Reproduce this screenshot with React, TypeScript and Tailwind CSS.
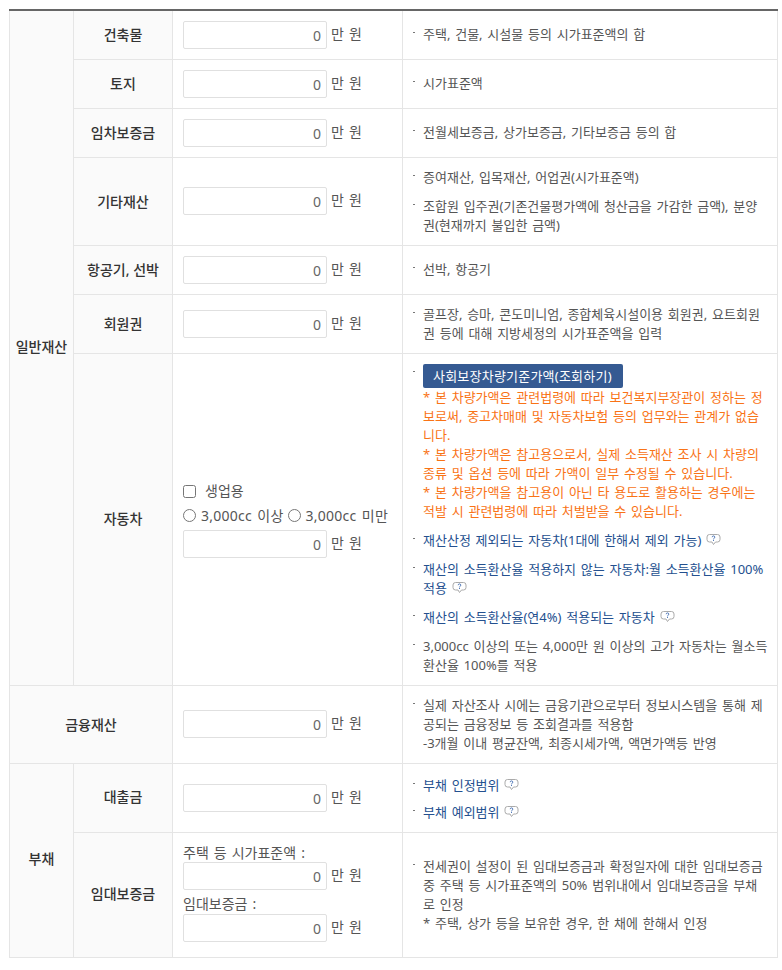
import React from "react";

const th = "border border-[#e5e5e5] bg-[#fafafa] text-center align-middle text-[14px] font-medium text-[#333] p-0";
const tdInput = "border border-[#e5e5e5] px-[10px] py-0 align-middle text-[14px] text-[#555]";
const tdDesc = "border border-[#e5e5e5] pl-[10px] pr-[8px] py-[8px] align-middle text-[13px] leading-[19px] text-[#555] [word-spacing:1.4px]";
const link = "text-[#24508f]";

function Money() {
  return (
    <div className="flex items-center">
      <input
        readOnly
        value="0"
        className="w-[144px] h-[28px] border border-[#e0e0e0] rounded-[2px] bg-white text-right pr-[5px] pt-[1px] text-[14px] text-[#666] outline-none"
      />
      <span className="ml-[4px] text-[14px] leading-[20px] text-[#555] -mt-[2px] [word-spacing:1.4px]">만 원</span>
    </div>
  );
}

function Help() {
  return (
    <svg width="15" height="14" viewBox="0 0 15 14" className="inline-block align-[-2px]">
      <path d="M3.500 1.500h8a2.500 2.500 0 0 1 2.500 2.500v2.500a2.500 2.500 0 0 1-2.500 2.500h-2l-2 2.500-1.500-2.500h-2.500a2.500 2.500 0 0 1-2.500-2.500V4a2.500 2.500 0 0 1 2.500-2.500z" fill="#fff" stroke="#aaa" strokeWidth="1" />
      <path d="M6.200 4.200a1.300 1.300 0 1 1 1.800 1.200c-.4.200-.5.400-.5.700" fill="none" stroke="#2a5aa8" strokeWidth="0.8" />
      <rect x="7" y="6.800" width="1" height="1" fill="#2a5aa8" />
    </svg>
  );
}

function Li({ children, tight = false }: { children: React.ReactNode; tight?: boolean }) {
  return (
    <li className={tight ? "relative pl-[10px] [&+li]:mt-[8px]" : "relative pl-[10px] [&+li]:mt-[10px]"}>
      <span className="absolute left-0 top-[7px] w-[2px] h-[1px] bg-[#777]" />
      {children}
    </li>
  );
}

export default function App() {
  return (
    <div className="bg-white h-[970px] pt-[9px] pl-[9px] pr-[4px] [font-family:'Noto_Sans','Noto_Sans_CJK_KR',sans-serif]">
      <table className="w-[769px] table-fixed border-collapse border-t-2 border-t-[#666]">
        <colgroup>
          <col className="w-[64px]" />
          <col className="w-[99px]" />
          <col className="w-[230px]" />
          <col />
        </colgroup>
        <tbody>
          <tr className="h-[49px]">
            <th rowSpan={7} className={th + " pb-[2px]"}>일반재산</th>
            <th className={th}>건축물</th>
            <td className={tdInput}><Money /></td>
            <td className={tdDesc}><ul><Li>주택, 건물, 시설물 등의 시가표준액의 합</Li></ul></td>
          </tr>
          <tr className="h-[49px]">
            <th className={th}>토지</th>
            <td className={tdInput}><Money /></td>
            <td className={tdDesc}><ul><Li>시가표준액</Li></ul></td>
          </tr>
          <tr className="h-[49px]">
            <th className={th}>임차보증금</th>
            <td className={tdInput}><Money /></td>
            <td className={tdDesc}><ul><Li>전월세보증금, 상가보증금, 기타보증금 등의 합</Li></ul></td>
          </tr>
          <tr className="h-[88px]">
            <th className={th}>기타재산</th>
            <td className={tdInput}><Money /></td>
            <td className={tdDesc}>
              <ul>
                <Li>증여재산, 입목재산, 어업권(시가표준액)</Li>
                <Li>조합원 입주권(기존건물평가액에 청산금을 가감한 금액), 분양권(현재까지 불입한 금액)</Li>
              </ul>
            </td>
          </tr>
          <tr className="h-[49px]">
            <th className={th}>항공기, 선박</th>
            <td className={tdInput}><Money /></td>
            <td className={tdDesc}><ul><Li>선박, 항공기</Li></ul></td>
          </tr>
          <tr className="h-[59px]">
            <th className={th}>회원권</th>
            <td className={tdInput}><Money /></td>
            <td className={tdDesc}><ul><Li>골프장, 승마, 콘도미니엄, 종합체육시설이용 회원권, 요트회원권 등에 대해 지방세정의 시가표준액을 입력</Li></ul></td>
          </tr>
          <tr className="h-[332px]">
            <th className={th + " pb-[2px]"}>자동차</th>
            <td className={tdInput}>
              <label className="flex items-center h-[22px]">
                <input type="checkbox" className="w-[13px] h-[13px] m-0" />
                <span className="ml-[9px] -mt-[2px]">생업용</span>
              </label>
              <div className="flex items-center h-[24px] mt-[1px] whitespace-nowrap [word-spacing:1.4px] tracking-[0.25px]">
                <input type="radio" name="cc" className="w-[13px] h-[13px] m-0" />
                <span className="ml-[5px]">3,000cc 이상</span>
                <input type="radio" name="cc" className="w-[13px] h-[13px] m-0 ml-[4px]" />
                <span className="ml-[5px]">3,000cc 미만</span>
              </div>
              <div className="mt-[2px]"><Money /></div>
            </td>
            <td className={tdDesc}>
              <ul>
                <Li>
                  <span className="inline-block h-[24px] pl-[10px] pr-[11px] rounded-[2px] bg-[#355a92] text-white text-[13px] leading-[24px] align-top tracking-[0.22px]">사회보장차량기준가액(조회하기)</span>
                  <div className="text-[#f97316]">
                    * 본 차량가액은 관련법령에 따라 보건복지부장관이 정하는 정보로써, 중고차매매 및 자동차보험 등의 업무와는 관계가 없습니다.<br />
                    * 본 차량가액은 참고용으로서, 실제 소득재산 조사 시 차량의 종류 및 옵션 등에 따라 가액이 일부 수정될 수 있습니다.<br />
                    * 본 차량가액을 참고용이 아닌 타 용도로 활용하는 경우에는 적발 시 관련법령에 따라 처벌받을 수 있습니다.
                  </div>
                </Li>
                <Li><span className={link}>재산산정 제외되는 자동차(1대에 한해서 제외 가능)</span> <Help /></Li>
                <Li><span className={link}>재산의 소득환산율 적용하지 않는 자동차:월 소득환산율 100% 적용</span> <Help /></Li>
                <Li><span className={link}>재산의 소득환산율(연4%) 적용되는 자동차</span> <Help /></Li>
                <Li>3,000cc 이상의 또는 4,000만 원 이상의 고가 자동차는 월소득환산율 100%를 적용</Li>
              </ul>
            </td>
          </tr>
          <tr className="h-[78px]">
            <th colSpan={2} className={th}>금융재산</th>
            <td className={tdInput}><Money /></td>
            <td className={tdDesc}>
              <ul><Li>실제 자산조사 시에는 금융기관으로부터 정보시스템을 통해 제공되는 금융정보 등 조회결과를 적용함<br />-3개월 이내 평균잔액, 최종시세가액, 액면가액등 반영</Li></ul>
            </td>
          </tr>
          <tr className="h-[69px]">
            <th rowSpan={2} className={th + " pb-[4px]"}>부채</th>
            <th className={th + " pb-[2px]"}>대출금</th>
            <td className={tdInput}><Money /></td>
            <td className={tdDesc + " pt-[10px]"}>
              <ul>
                <Li tight><span className={link}>부채 인정범위</span> <Help /></Li>
                <Li tight><span className={link}>부채 예외범위</span> <Help /></Li>
              </ul>
            </td>
          </tr>
          <tr className="h-[125px]">
            <th className={th + " pb-[2px]"}>임대보증금</th>
            <td className={tdInput + " pb-[4px]"}>
              <div className="leading-[19px] [word-spacing:1.4px]">주택 등 시가표준액 :</div>
              <Money />
              <div className="leading-[20px] mt-[4px] [word-spacing:1.4px]">임대보증금 :</div>
              <Money />
            </td>
            <td className={tdDesc}>
              <ul>
                <Li>전세권이 설정이 된 임대보증금과 확정일자에 대한 임대보증금 중 주택 등 시가표준액의 50% 범위내에서 임대보증금을 부채로 인정<br />* 주택, 상가 등을 보유한 경우, 한 채에 한해서 인정</Li>
              </ul>
            </td>
          </tr>
        </tbody>
      </table>
    </div>
  );
}
